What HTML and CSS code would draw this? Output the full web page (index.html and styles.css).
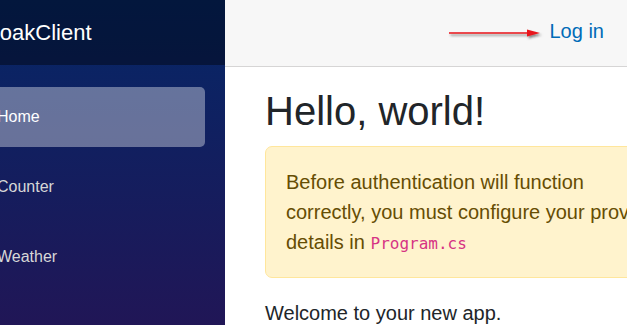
FILE: index.html
```html
<!DOCTYPE html>
<html lang="en">
<head>
<meta charset="utf-8">
<title>KeycloakClient</title>
<link rel="stylesheet" href="styles.css">
</head>
<body>
<div class="page">
  <div class="sidebar">
    <div class="sidebar-inner">
      <div class="brand-row">
        <a class="brand" href="#">KeycloakClient</a>
      </div>
      <nav class="nav">
        <div class="nav-item"><a class="nav-link active" href="#">Home</a></div>
        <div class="nav-item"><a class="nav-link" href="#">Counter</a></div>
        <div class="nav-item"><a class="nav-link" href="#">Weather</a></div>
      </nav>
    </div>
  </div>
  <main class="main">
    <div class="top-row">
      <svg class="arrow" width="96" height="14" viewBox="0 0 96 14" aria-hidden="true">
        <defs>
          <filter id="shadow" x="-10%" y="-50%" width="120%" height="250%">
            <feDropShadow dx="1.5" dy="2" stdDeviation="1" flood-color="#333" flood-opacity="0.55"/>
          </filter>
        </defs>
        <g filter="url(#shadow)">
          <line x1="1" y1="6" x2="82" y2="6" stroke="#e8161b" stroke-width="1.6"/>
          <polygon points="79,2.5 92,6 79,9.5" fill="#e8161b"/>
        </g>
      </svg>
      <a class="login" href="#">Log in</a>
    </div>
    <article class="content">
      <h1 class="title">Hello, world!</h1>
      <div class="alert">
        Before authentication will function correctly, you must configure your provider details in <code class="code">Program.cs</code>
      </div>
      <p class="welcome">Welcome to your new app.</p>
    </article>
  </main>
</div>
</body>
</html>
```

FILE: styles.css
```css
html, body {
  margin: 0;
  padding: 0;
  height: 100%;
  overflow: hidden;
}

body {
  font-family: "Liberation Sans", Arial, Helvetica, sans-serif;
  font-size: 20px;
  line-height: 1.5;
  color: #212529;
  background: #ffffff;
}

.page {
  display: flex;
  height: 100%;
}

.sidebar {
  flex: 0 0 225px;
  width: 225px;
  overflow: hidden;
  background: linear-gradient(180deg, rgb(5, 39, 103) 0px, #3a0647 627px);
  background-repeat: no-repeat;
  background-size: 100% 900px;
}

.sidebar-inner {
  width: 314px;
  margin-left: -89px;
}

.brand-row {
  height: 65px;
  background: rgba(0, 0, 0, 0.4);
  display: flex;
  align-items: center;
  padding-left: 35px;
}

.brand {
  color: #ffffff;
  font-size: 22px;
  line-height: 1;
  text-decoration: none;
  white-space: nowrap;
}

.nav {
  padding-top: 22px;
  display: flex;
  flex-direction: column;
}

.nav-item {
  padding: 0 20px 10px 22px;
}

.nav-link {
  display: flex;
  align-items: center;
  height: 60px;
  padding-left: 64px;
  border-radius: 5px;
  color: #d7d7d7;
  font-size: 16px;
  text-decoration: none;
}

.nav-link.active {
  background: rgba(255, 255, 255, 0.37);
  color: #ffffff;
}

.main {
  flex: 1 1 auto;
  min-width: 0;
}

.top-row {
  box-sizing: border-box;
  height: 67px;
  background: #f7f7f7;
  border-bottom: 1px solid #d6d5d5;
  display: flex;
  align-items: center;
  justify-content: flex-end;
  padding: 0 23px 4px 0;
}

.arrow {
  display: block;
  margin-right: 6px;
  margin-top: 6px;
}

.login {
  color: #006bb7;
  text-decoration: none;
  white-space: nowrap;
}

.content {
  padding: 20px 0 0 40px;
}

.title {
  margin: 0 0 11px;
  font-size: 40px;
  font-weight: 500;
  line-height: 1.2;
}

.alert {
  box-sizing: border-box;
  width: 420px;
  padding: 20px;
  margin-bottom: 20px;
  color: #664d03;
  background: #fff3cd;
  border: 1px solid #ffe69c;
  border-radius: 7px;
}

.code {
  font-family: "DejaVu Sans Mono", "Liberation Mono", monospace;
  font-size: 16px;
  color: #d63384;
}

.welcome {
  margin: 0;
}
```
